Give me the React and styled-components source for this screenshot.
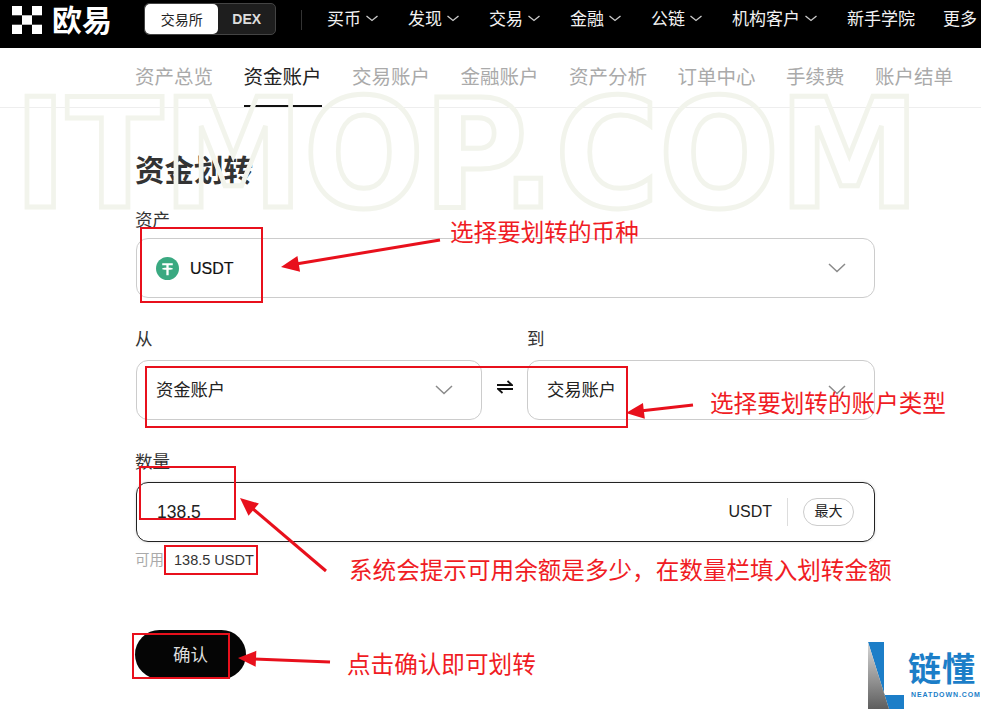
import React from 'react';
import styled, { createGlobalStyle } from 'styled-components';

const Global = createGlobalStyle`
    html, body { margin: 0; padding: 0; background: #fff; }
    body { font-family: "Liberation Sans", "Noto Sans CJK SC", sans-serif; }
`;

const Page = styled.div`
    position: relative;
    width: 981px;
    height: 711px;
    overflow: hidden;
    background: #fff;
`;

const TopBar = styled.header`
    height: 48px;
    background: #000;
    display: flex;
    align-items: center;
    padding-left: 12px;
    color: #f2f2f2;
    white-space: nowrap;
    overflow: hidden;
`;

const BrandMark = styled.svg`
    flex: none;
    margin-top: -9px;
`;

const Brand = styled.div`
    font-size: 30px;
    font-weight: 700;
    color: #fff;
    margin: -12px 0 0 10px;
    width: 60px;
`;

const Segment = styled.div`
    display: flex;
    margin-left: 32px;
    width: 132px;
    height: 32px;
    box-sizing: border-box;
    margin-top: -10px;
    border: 1px solid #444;
    border-radius: 5px;
    background: #1e1e1e;
    font-size: 14px;
`;

const SegmentItem = styled.div`
    display: flex;
    align-items: center;
    justify-content: center;
    width: ${p => (p.$on ? '74px' : '57px')};
    border-radius: 5px;
    background: ${p => (p.$on ? '#fff' : 'transparent')};
    color: ${p => (p.$on ? '#222' : '#ddd')};
    font-weight: ${p => (p.$on ? 400 : 700)};
`;

const Divider = styled.div`
    width: 1px;
    height: 20px;
    background: #333;
    margin: -8px 25px 0;
`;

const NavList = styled.nav`
    display: flex;
    gap: 28px;
    margin-top: -13px;
    font-size: 17px;
`;

const NavItem = styled.div`
    display: flex;
    align-items: center;
    gap: 3px;
`;

const SubNav = styled.div`
    height: 60px;
    box-sizing: border-box;
    border-bottom: 1px solid #eee;
    display: flex;
    gap: 30.5px;
    padding-left: 135px;
    white-space: nowrap;
`;

const SubTab = styled.div`
    position: relative;
    font-size: 19.5px;
    line-height: 58px;
    color: ${p => (p.$on ? '#222' : '#aaa')};
    ${p => p.$on && `
        &::after {
            content: "";
            position: absolute;
            left: 0;
            right: 0;
            bottom: 0;
            height: 2px;
            background: #111;
        }
    `}
`;

const Form = styled.main`
    width: 740px;
    margin-left: 135px;
`;

const Title = styled.h1`
    margin: 45px 0 21px;
    font-size: 29.5px;
    line-height: 36px;
    font-weight: 700;
    color: #333;
`;

const Label = styled.div`
    font-size: 17.5px;
    line-height: 20px;
    color: #333;
    margin-top: ${p => p.$mt || 0}px;
    margin-bottom: ${p => p.$mb || 10}px;
`;

const Select = styled.div`
    box-sizing: border-box;
    height: 60px;
    margin-left: 1px;
    border: 1.5px solid #ccc;
    border-radius: 12px;
    display: flex;
    align-items: center;
    padding: 0 28px 0 19px;
    gap: 11px;
    font-size: 17.3px;
    color: #222;
    flex: ${p => (p.$grow ? '1' : 'none')};
    width: ${p => p.$w || 'auto'};
`;

const Coin = styled.span`
    font-size: 16px;
    color: #111;
    margin-top: 1px;
    -webkit-text-stroke: 0.2px #111;
`;

const Account = styled.span`
    margin-top: -4px;
`;

const Spacer = styled.div`
    flex: 1;
`;

const Pair = styled.div`
    display: flex;
    margin-top: 31px;
`;

const PairCol = styled.div`
    width: ${p => p.$w};
`;

const SwapBox = styled.div`
    width: 44px;
    height: 54px;
    flex: none;
    box-sizing: border-box;
    padding-left: 2px;
    display: flex;
    align-items: center;
    justify-content: center;
`;

const SelectRow = styled.div`
    display: flex;
`;

const AmountField = styled.div`
    box-sizing: border-box;
    height: 60px;
    margin-left: 1px;
    border: 1.5px solid #222;
    border-radius: 12px;
    display: flex;
    align-items: center;
    padding: 0 20px;
    font-size: 17.5px;
    color: #222;
    box-shadow: 0 0 3px rgba(0, 0, 0, 0.15);
`;

const AmountValue = styled.span`
    flex: 1;
`;

const Unit = styled.span`
    font-size: 16px;
    margin-right: 15px;
`;

const MaxButton = styled.span`
    border-left: 1px solid #ddd;
    padding-left: 15px;
    display: flex;
    align-items: center;
    height: 28px;
`;

const MaxPill = styled.span`
    box-sizing: border-box;
    width: 51px;
    height: 28px;
    border: 1px solid #ccc;
    border-radius: 14px;
    font-size: 14px;
    line-height: 25px;
    text-align: center;
`;

const Available = styled.div`
    margin-top: 9px;
    font-size: 14.5px;
    line-height: 18px;
    color: #aaa;
    & b {
        font-weight: 400;
        color: #333;
        margin-left: 10px;
    }
`;

const Confirm = styled.button`
    display: block;
    margin-top: 61px;
    width: 111px;
    height: 49px;
    border: 0;
    border-radius: 25px;
    background: #050505;
    color: #ddd;
    font: inherit;
    font-size: 17.5px;
    padding: 0 0 2px;
`;

const Watermark = styled.div`
    position: absolute;
    left: 14px;
    top: 60px;
    font-family: "DejaVu Sans", sans-serif;
    font-weight: 700;
    font-size: 152px;
    line-height: 190px;
    white-space: nowrap;
    color: transparent;
    -webkit-text-stroke: 5px #f2f4ec;
    transform-origin: left top;
    transform: scaleX(0.93);
    pointer-events: none;
`;

const Overlay = styled.svg`
    position: absolute;
    inset: 0;
    pointer-events: none;
`;

const Note = styled.div`
    position: absolute;
    left: ${p => p.$x}px;
    top: ${p => p.$y}px;
    font-size: 23.6px;
    line-height: 30px;
    color: #f01c24;
    white-space: nowrap;
`;

const NeatLogo = styled.div`
    position: absolute;
    left: 868px;
    top: 642px;
    width: 110px;
    height: 68px;
`;

const NeatName = styled.div`
    position: absolute;
    left: 40px;
    top: 8px;
    font-size: 33px;
    line-height: 40px;
    font-weight: 700;
    color: #1c7ec8;
    letter-spacing: 1px;
    white-space: nowrap;
`;

const NeatSub = styled.div`
    position: absolute;
    left: 43px;
    top: 49px;
    font-size: 7px;
    line-height: 8px;
    font-weight: 700;
    color: #1c7ec8;
    letter-spacing: 0.9px;
    white-space: nowrap;
`;

const OkxMark = () => (
    <BrandMark width="30" height="28" viewBox="0 0 30 28">
        <g fill="#fff">
            <rect x="0" y="0" width="10" height="9.3" />
            <rect x="20" y="0" width="10" height="9.3" />
            <rect x="10" y="9.3" width="10" height="9.4" />
            <rect x="0" y="18.7" width="10" height="9.3" />
            <rect x="20" y="18.7" width="10" height="9.3" />
        </g>
    </BrandMark>
);

const TetherIcon = () => (
    <svg width="23" height="23" viewBox="0 0 24 24">
        <circle cx="12" cy="12" r="12" fill="#3aa981" />
        <path d="M6.5 6.5h11v2.2h-4.3v2.4c2.3.1 4.6.5 4.6 1.1s-2.3 1-4.6 1.1V19h-2.4v-5.7c-2.3-.1-4.6-.5-4.6-1.1s2.300-1 4.600-1.100V8.700H6.500z" fill="#fff" />
    </svg>
);

const SwapIcon = () => (
    <svg width="16" height="14" viewBox="0 0 16 14" fill="none" stroke="#111" strokeWidth="1.8">
        <path d="M0 5h15L10.5 1" />
        <path d="M16 9H1l4.5 4" />
    </svg>
);

const Chevron = () => (
    <svg width="18" height="10" viewBox="0 0 18 10" fill="none" stroke="#8a8a8a" strokeWidth="1.500">
        <path d="M1 1l8 7.500L17 1" />
    </svg>
);

const NavChevron = () => (
    <svg width="16" height="16" viewBox="0 0 16 16" fill="none" stroke="#ccc" strokeWidth="1.300">
        <path d="M2.500 6l5.500 4.500L13.500 6" />
    </svg>
);

const navItems = [
    ['买币', true], ['发现', true], ['交易', true], ['金融', true],
    ['公链', true], ['机构客户', true], ['新手学院', false], ['更多', false],
];

const tabs = ['资产总览', '资金账户', '交易账户', '金融账户', '资产分析', '订单中心', '手续费', '账户结单'];

const boxes = [
    [141, 228, 121, 74],
    [146, 367, 481, 60],
    [140, 467, 95, 52],
    [165, 546, 92, 28],
    [133, 634, 96, 44],
];

const arrows = [
    [440, 240, 296, 264, 281, 267],
    [693, 405, 640, 411, 626, 413],
    [326, 571, 252, 508, 240, 498],
    [330, 662, 254, 659, 238, 658],
];

// arrow head: triangle around the tip, pointing along the line
const arrowHead = ([x1, y1, , , x2, y2]) => {
    const len = Math.hypot(x2 - x1, y2 - y1);
    const ux = (x2 - x1) / len;
    const uy = (y2 - y1) / len;
    const bx = x2 - ux * 18;
    const by = y2 - uy * 18;
    return `${x2},${y2} ${bx - uy * 8},${by + ux * 8} ${bx + uy * 8},${by - ux * 8}`;
};

const App = () => (
    <Page>
        <Global />
        <TopBar>
            <OkxMark />
            <Brand>欧易</Brand>
            <Segment>
                <SegmentItem $on>交易所</SegmentItem>
                <SegmentItem>DEX</SegmentItem>
            </Segment>
            <Divider />
            <NavList>
                {navItems.map(([name, more]) => (
                    <NavItem key={name}>
                        {name}
                        {more && <NavChevron />}
                    </NavItem>
                ))}
            </NavList>
        </TopBar>
        <SubNav>
            {tabs.map((t, i) => (
                <SubTab key={t} $on={i === 1}>{t}</SubTab>
            ))}
        </SubNav>
        <Form>
            <Title>资金划转</Title>
            <Label $mb={8}>资产</Label>
            <Select>
                <TetherIcon />
                <Coin>USDT</Coin>
                <Spacer />
                <Chevron />
            </Select>
            <Pair>
                <PairCol $w="392px"><Label $mb={11}>从</Label></PairCol>
                <PairCol $w="348px"><Label $mb={11}>到</Label></PairCol>
            </Pair>
            <SelectRow>
                <Select $w="346px">
                    <Account>资金账户</Account>
                    <Spacer />
                    <Chevron />
                </Select>
                <SwapBox><SwapIcon /></SwapBox>
                <Select $grow>
                    <Account>交易账户</Account>
                    <Spacer />
                    <Chevron />
                </Select>
            </SelectRow>
            <Label $mt={32} $mb={10}>数量</Label>
            <AmountField>
                <AmountValue>138.5</AmountValue>
                <Unit>USDT</Unit>
                <MaxButton><MaxPill>最大</MaxPill></MaxButton>
            </AmountField>
            <Available>可用<b>138.5 USDT</b></Available>
            <Confirm>确认</Confirm>
        </Form>
        <Watermark>ITMOP.COM</Watermark>
        <Overlay width="981" height="711" viewBox="0 0 981 711">
            {boxes.map(([x, y, w, h]) => (
                <rect key={x} x={x} y={y} width={w} height={h} fill="none" stroke="#e8101c" strokeWidth="2" />
            ))}
            {arrows.map(a => (
                <g key={a[0]}>
                    <line x1={a[0]} y1={a[1]} x2={a[2]} y2={a[3]} stroke="#e8101c" strokeWidth="3" />
                    <polygon points={arrowHead(a)} fill="#e8101c" />
                </g>
            ))}
        </Overlay>
        <Note $x={450} $y={218}>选择要划转的币种</Note>
        <Note $x={710} $y={389}>选择要划转的账户类型</Note>
        <Note $x={349} $y={556}>系统会提示可用余额是多少，在数量栏填入划转金额</Note>
        <Note $x={347} $y={650}>点击确认即可划转</Note>
        <NeatLogo>
            <svg width="37" height="68" viewBox="0 0 37 68">
                <defs>
                    <linearGradient id="neatGrey" x1="0" y1="0" x2="0" y2="1">
                        <stop offset="0" stopColor="#d8d8d8" />
                        <stop offset="1" stopColor="#5e5e5e" />
                    </linearGradient>
                </defs>
                <path d="M0 0H16V53H36V67H21Z" fill="#1c7ec8" />
                <path d="M0 0L21 67H0Z" fill="url(#neatGrey)" />
            </svg>
            <NeatName>链懂</NeatName>
            <NeatSub>NEATDOWN.COM</NeatSub>
        </NeatLogo>
    </Page>
);

export default App;
